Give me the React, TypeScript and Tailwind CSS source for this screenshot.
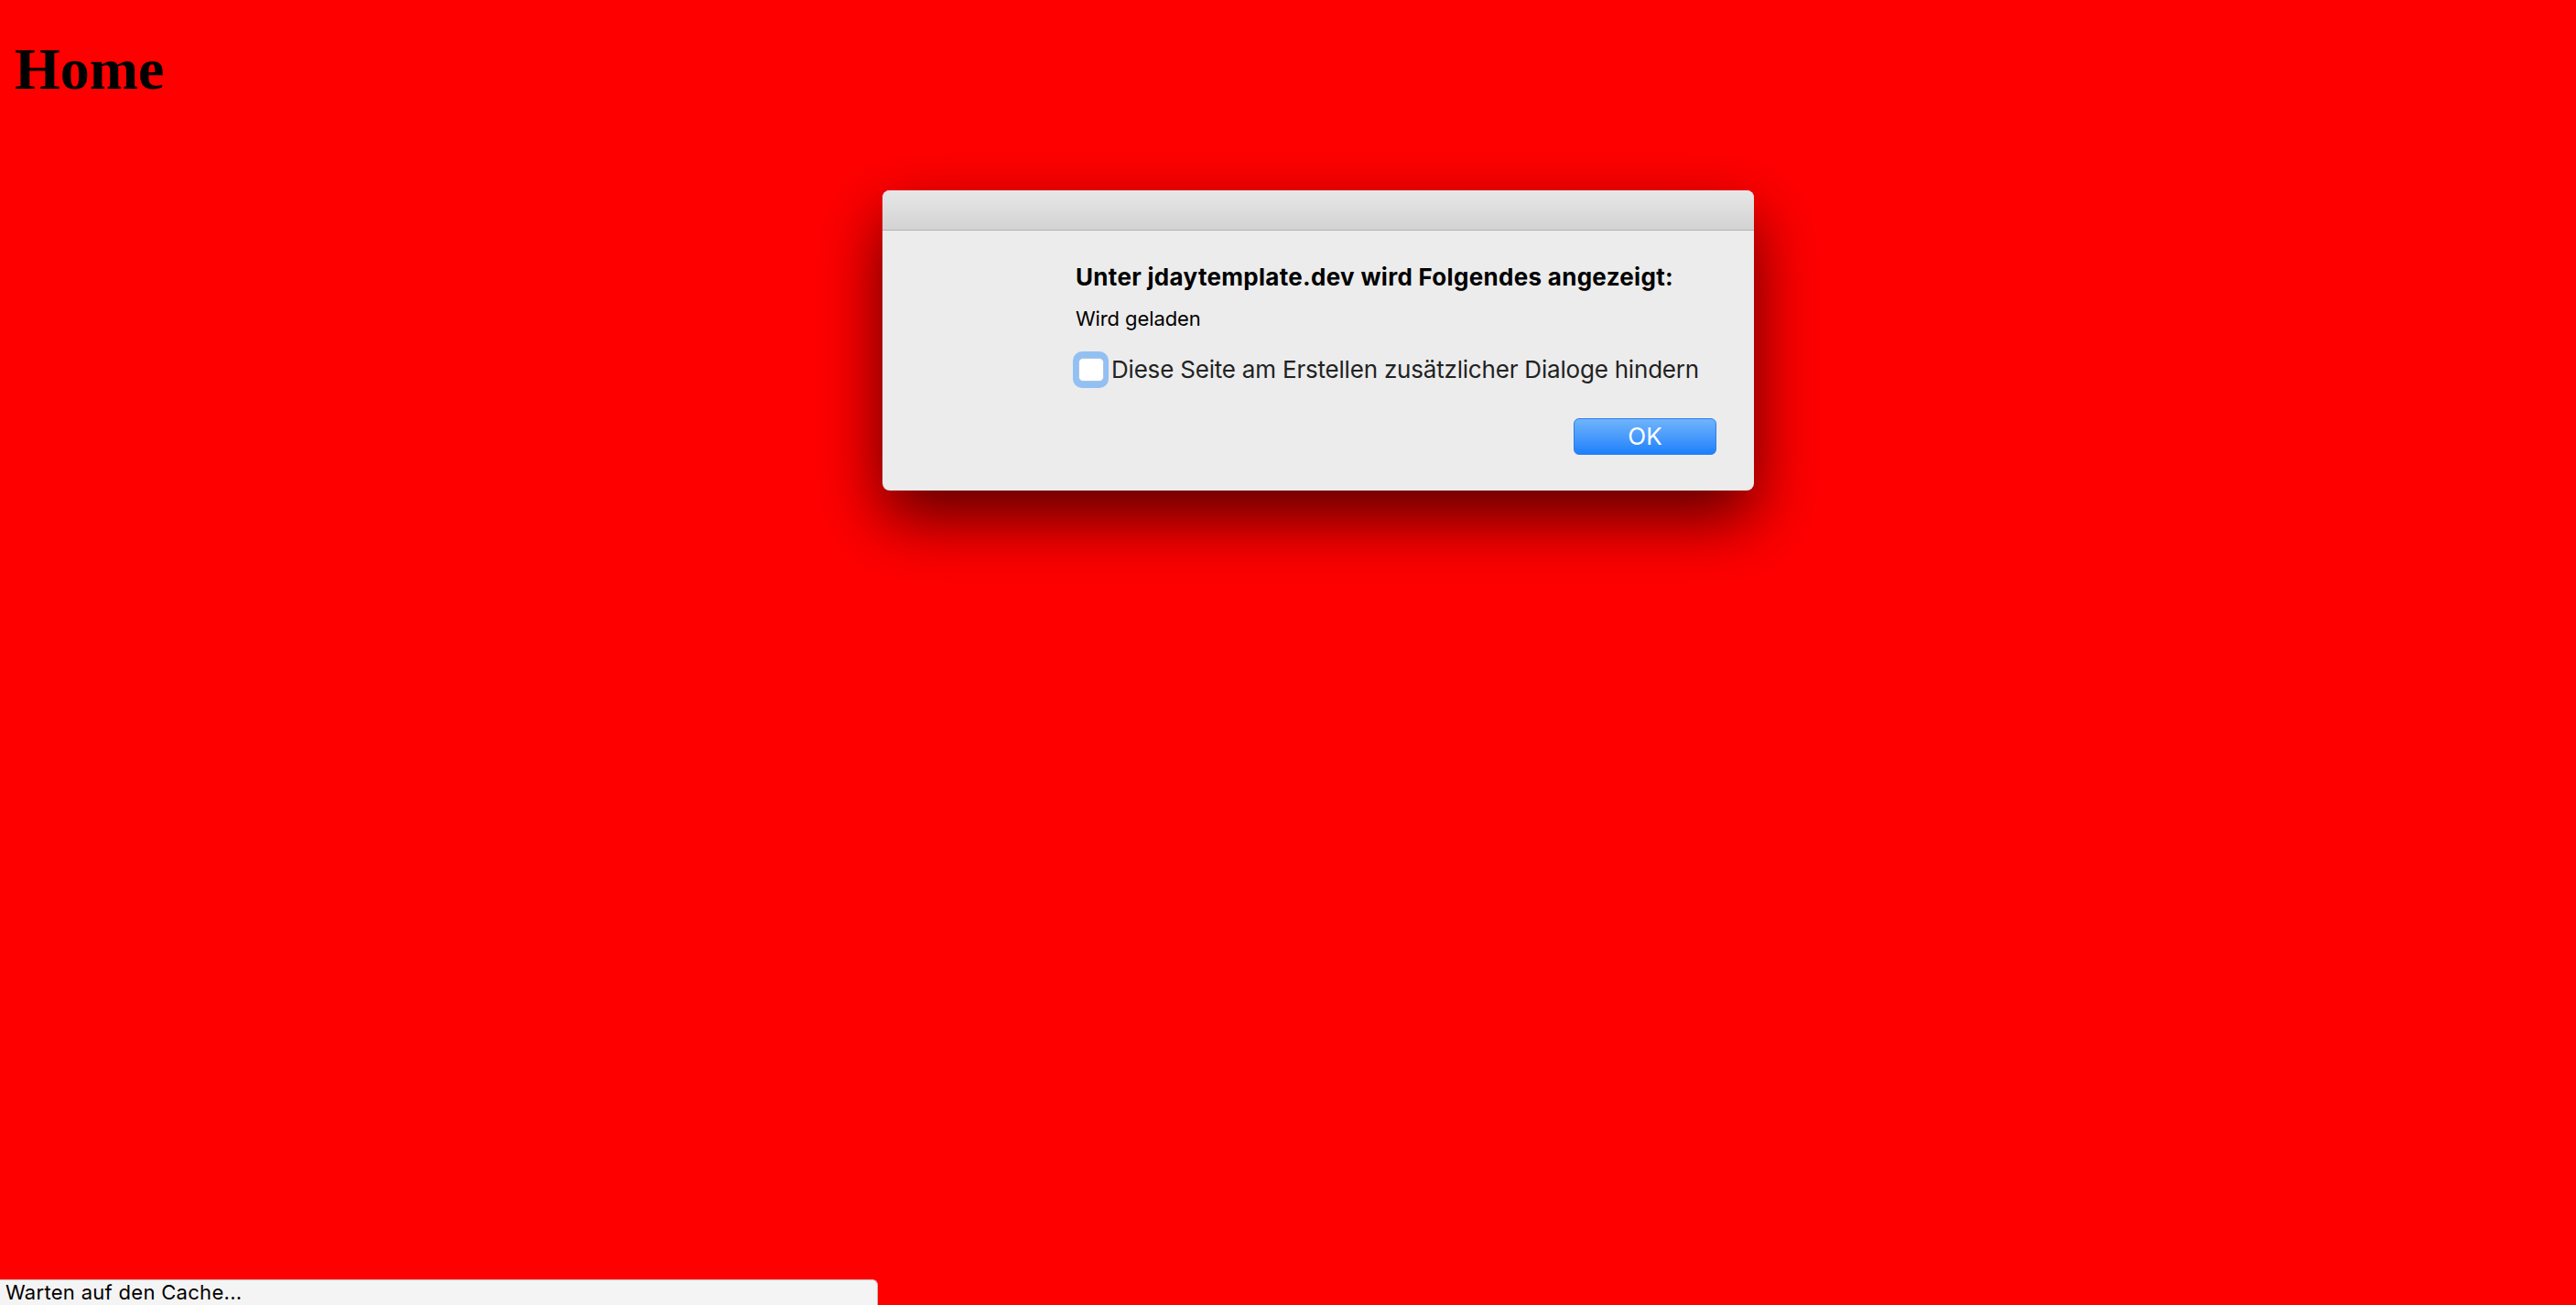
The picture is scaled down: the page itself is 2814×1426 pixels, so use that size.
export default function App() {
  return (
    <div className="relative h-[1426px] w-full overflow-hidden bg-[#ff0000]">
      <h1 className="ml-[16px] pt-[44px] font-['Liberation_Serif',serif] text-[64px] font-bold leading-[64px] text-black">
        Home
      </h1>

      {/* alert dialog */}
      <div className="absolute left-[964px] top-[208px] w-[952px] overflow-hidden rounded-[8px] bg-[#ececec] font-['Inter',sans-serif] shadow-[0_30px_70px_rgba(0,0,0,0.65)]">
        <div className="h-[44px] border-b border-[#b2b2b2] bg-gradient-to-b from-[#e7e7e7] to-[#d3d3d3]" />
        <div className="pl-[211px] pr-[41px] pt-[35px] pb-[39px]">
          <p className="text-[26px] font-bold leading-[32px] tracking-[0.3px] text-black">
            Unter jdaytemplate.dev wird Folgendes angezeigt:
          </p>
          <p className="mt-[15px] text-[22px] leading-[28px] tracking-[-0.1px] text-black">Wird geladen</p>
          <label className="mt-[26px] flex h-[32px] items-center">
            <span className="-ml-[3px] flex h-[40px] w-[39px] shrink-0 items-center justify-center rounded-[10px] bg-[#93c0f2]">
              <span className="h-[26px] w-[28px] rounded-[5px] border border-[#a9c4e4] bg-white" />
            </span>
            <span className="ml-[3px] text-[26px] leading-[32px] tracking-[-0.2px] text-[#222]">
              Diese Seite am Erstellen zusätzlicher Dialoge hindern
            </span>
          </label>
          <div className="mt-[37px] flex justify-end">
            <button className="h-[40px] w-[156px] rounded-[6px] border border-[#2a7ef0] bg-gradient-to-b from-[#6fb4fb] to-[#1a80fb] text-[26px] leading-[38px] text-white">
              OK
            </button>
          </div>
        </div>
      </div>

      {/* status bubble */}
      <div className="absolute bottom-0 left-0 h-[28px] w-[959px] rounded-tr-[6px] border border-l-0 border-b-0 border-[#c6c6c6] bg-[#f4f4f4] pl-[6px] font-['Inter',sans-serif] text-[22px] leading-[27px] tracking-[0.3px] text-black">
        Warten auf den Cache...
      </div>
    </div>
  );
}
